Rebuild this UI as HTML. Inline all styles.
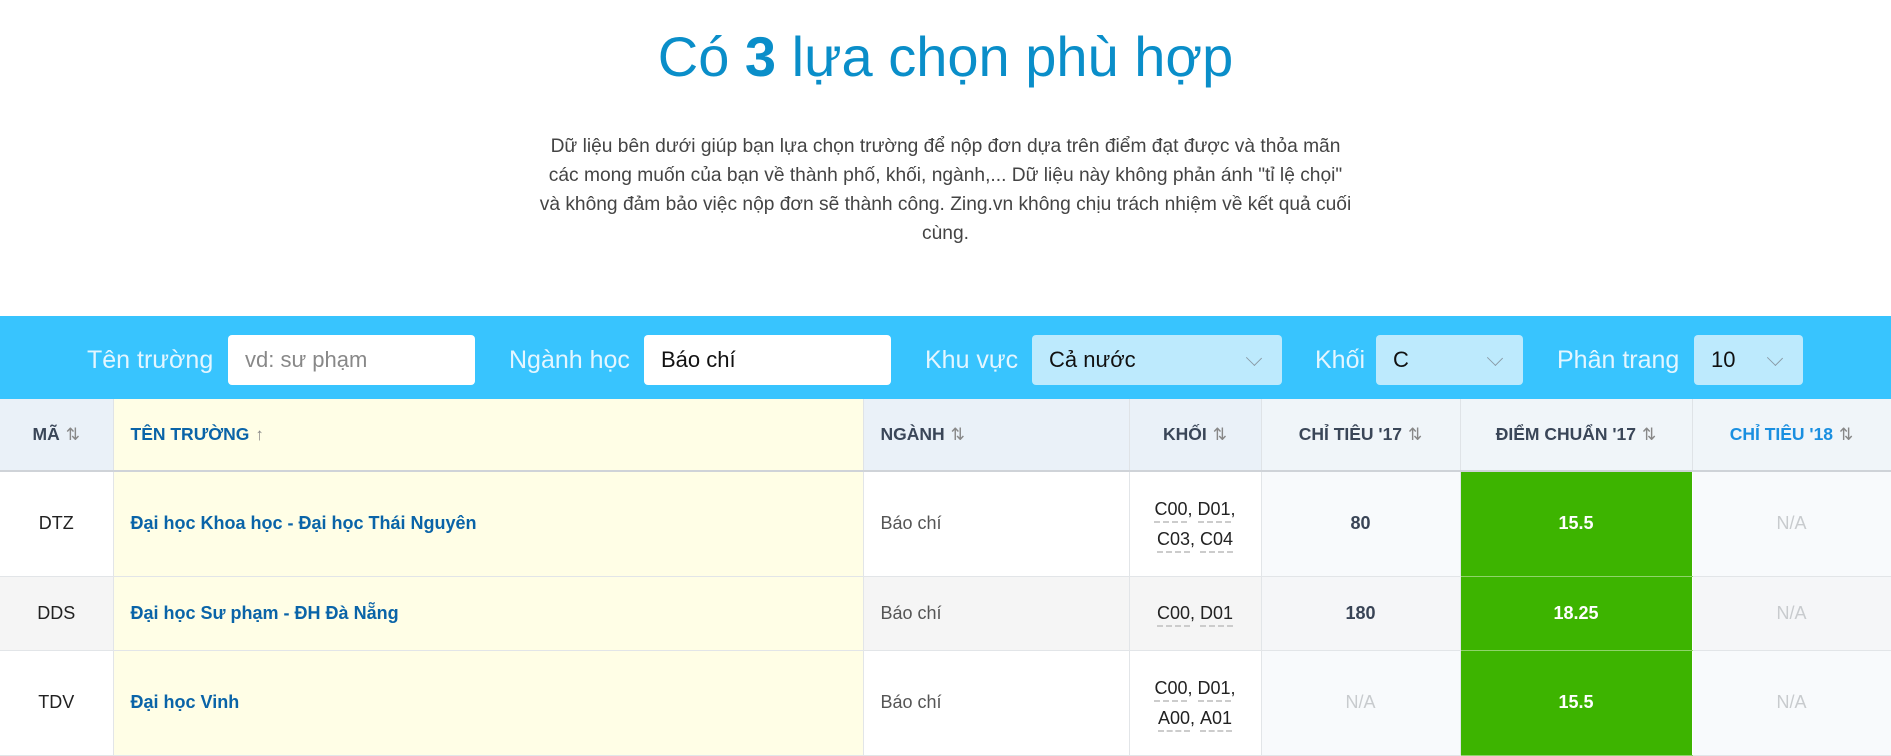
<!DOCTYPE html>
<html><head><meta charset="utf-8"><style>
*{margin:0;padding:0;box-sizing:border-box}
body{width:1891px;height:753px;overflow:hidden;background:#fff;font-family:"Liberation Sans",Arial,sans-serif;position:relative}
h1{position:absolute;top:22px;left:0;width:1891px;text-align:center;font-weight:normal;font-size:56px;color:#0a8ec9;line-height:70px}
h1 b{font-weight:bold}
.p{position:absolute;top:132px;left:0;width:1891px;text-align:center;font-size:19.2px;line-height:29px;color:#444;white-space:nowrap}
.bar{position:absolute;top:316px;left:0;width:1891px;height:83px;background:#38c4fe}
.lb{position:absolute;top:345px;font-size:25px;color:#e4f6ff;line-height:30px}
.in{position:absolute;top:335px;height:50px;border-radius:4px;background:#fff;font-size:22px;line-height:50px;padding-left:17px;color:#111}
.sel{background:#bdeafd}
.chev{position:absolute;right:22px;top:17px;width:12px;height:12px;border-right:1.5px solid #8a9aa5;border-bottom:1.5px solid #8a9aa5;transform:rotate(45deg) scaleY(.9)}
table{position:absolute;top:399px;left:0;border-collapse:collapse;table-layout:fixed;width:1891px}
th{height:72px;background:#eaf1f8;font-size:17.5px;color:#3a4658;font-weight:bold;border-bottom:2px solid #cfd3d8;border-right:1px solid #dfe3e7;white-space:nowrap}
td{border-right:1px solid #e2e5e8;border-bottom:1px solid #e2e5e8;font-size:18px;text-align:center;color:#222}
.ar{color:#888;font-weight:normal;font-size:17px;margin-left:6px}
.yl{background:#fffee6}
.nm{text-align:left;padding-left:17px;color:#0a64a8;font-weight:bold}
.ng{text-align:left;padding-left:17px;color:#555}
.gr{background:#3db400;color:#fff;font-weight:bold;border-right:1px solid #fff;border-bottom:1px solid #8fd46a}
.ct{background:#f8fafc;color:#394456;font-weight:bold}
.na{color:#c8cbce;font-weight:normal}
.k{line-height:30px}
.k span{border-bottom:2px dashed #ccc;line-height:24px;display:inline-block}
.alt td{background:#f5f5f5}
.alt td.yl{background:#fffee6}
.alt td.gr{background:#3db400}
.alt td.ct{background:#f5f6f8}
</style></head><body>
<h1>Có <b>3</b> lựa chọn phù hợp</h1>
<div class="p">Dữ liệu bên dưới giúp bạn lựa chọn trường để nộp đơn dựa trên điểm đạt được và thỏa mãn<br>các mong muốn của bạn về thành phố, khối, ngành,... Dữ liệu này không phản ánh "tỉ lệ chọi"<br>và không đảm bảo việc nộp đơn sẽ thành công. Zing.vn không chịu trách nhiệm về kết quả cuối<br>cùng.</div>
<div class="bar"></div>
<div class="lb" style="left:87px">Tên trường</div>
<div class="in" style="left:228px;width:247px;color:#888">vd: sư phạm</div>
<div class="lb" style="left:509px">Ngành học</div>
<div class="in" style="left:644px;width:247px">Báo chí</div>
<div class="lb" style="left:925px">Khu vực</div>
<div class="in sel" style="left:1032px;width:250px">Cả nước<i class="chev"></i></div>
<div class="lb" style="left:1315px">Khối</div>
<div class="in sel" style="left:1376px;width:147px">C<i class="chev"></i></div>
<div class="lb" style="left:1557px">Phân trang</div>
<div class="in sel" style="left:1694px;width:109px">10<i class="chev"></i></div>
<table>
<colgroup><col style="width:113px"><col style="width:750px"><col style="width:266px"><col style="width:132px"><col style="width:199px"><col style="width:232px"><col style="width:199px"></colgroup>
<tr><th>MÃ<span class="ar">⇅</span></th><th class="yl" style="text-align:left;padding-left:17px;color:#0a64a8;background:#fffee6">TÊN TRƯỜNG<span class="ar">↑</span></th><th style="text-align:left;padding-left:17px">NGÀNH<span class="ar">⇅</span></th><th>KHỐI<span class="ar">⇅</span></th><th style="background:#f0f5f9">CHỈ TIÊU '17<span class="ar">⇅</span></th><th style="background:#f0f5f9">ĐIỂM CHUẨN '17<span class="ar">⇅</span></th><th style="background:#f0f5f9;color:#1a8fe0">CHỈ TIÊU '18<span class="ar">⇅</span></th></tr>
<tr style="height:105px"><td>DTZ</td><td class="yl nm">Đại học Khoa học - Đại học Thái Nguyên</td><td class="ng">Báo chí</td><td class="k"><span>C00</span>, <span>D01</span>,<br><span>C03</span>, <span>C04</span></td><td class="ct">80</td><td class="gr">15.5</td><td class="ct na">N/A</td></tr>
<tr class="alt" style="height:74px"><td>DDS</td><td class="yl nm">Đại học Sư phạm - ĐH Đà Nẵng</td><td class="ng">Báo chí</td><td class="k"><span>C00</span>, <span>D01</span></td><td class="ct">180</td><td class="gr">18.25</td><td class="ct na">N/A</td></tr>
<tr style="height:105px"><td>TDV</td><td class="yl nm">Đại học Vinh</td><td class="ng">Báo chí</td><td class="k"><span>C00</span>, <span>D01</span>,<br><span>A00</span>, <span>A01</span></td><td class="ct na">N/A</td><td class="gr">15.5</td><td class="ct na">N/A</td></tr>
</table>
</body></html>
